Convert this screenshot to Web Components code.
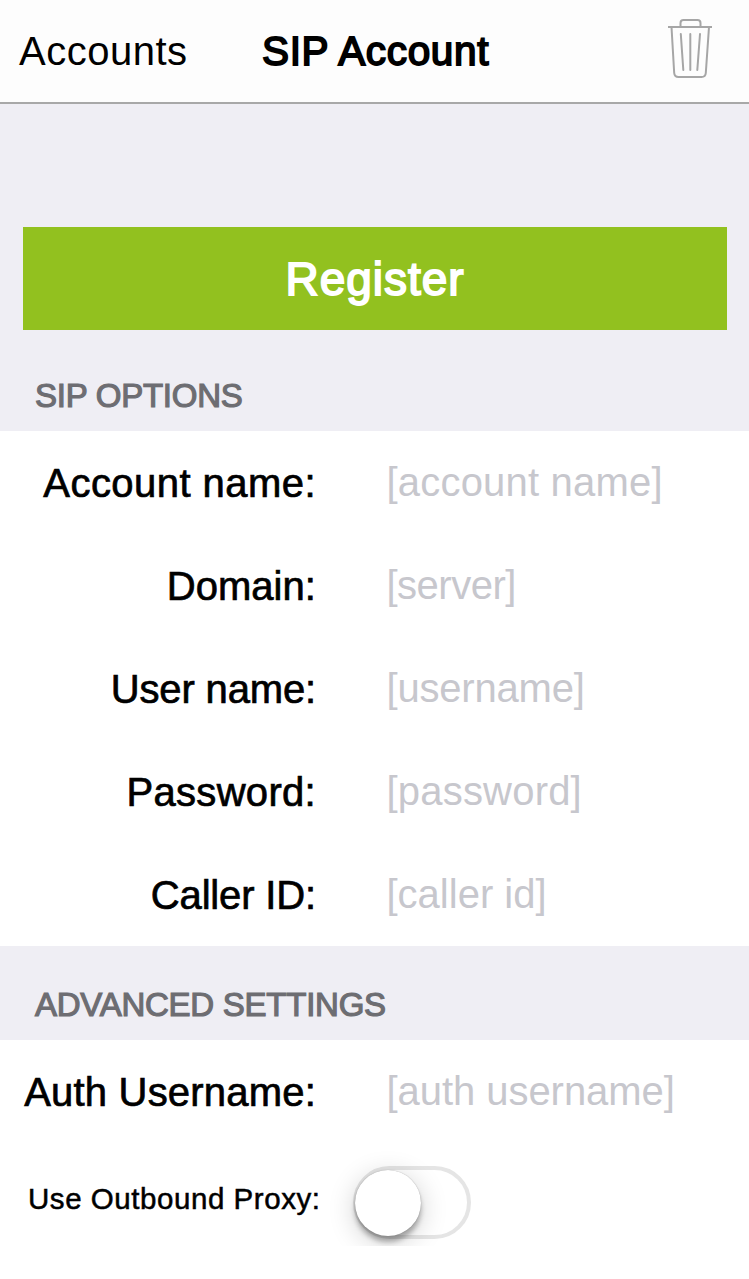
<!DOCTYPE html>
<html lang="en">
<head>
<meta charset="utf-8">
<title>SIP Account</title>
<style>
  body {
    margin: 0;
    background-color: #fff;
    color: #000;
    font-family: "Liberation Sans", Arial, sans-serif;
  }
</style>
</head>
<body>
<sip-app></sip-app>

<script>
class NavBar extends HTMLElement {
  constructor() {
    super();
    this.shadowDOM = this.attachShadow({ mode: 'open' });
  }

  connectedCallback() {
    this.shadowDOM.innerHTML = `
      <style>
        :host {
          display: grid;
          grid-template-columns: 243px 1fr auto;
          align-items: center;
          box-sizing: border-box;
          height: 104px;
          padding: 0 37px 0 19px;
          background-color: #fdfdfd;
          border-bottom: 2px solid #a8a8a8;
          line-height: 46px;
          white-space: nowrap;
        }

        .back {
          font-size: 40px;
          letter-spacing: .5px;
        }

        .title {
          font-size: 40.5px;
          letter-spacing: .65px;
          -webkit-text-stroke: 1.8px currentColor;
        }

        svg {
          display: block;
          width: 44px;
          height: 60px;
          margin-top: -6px;
        }
      </style>

      <span class="back">${this.getAttribute('back')}</span>
      <span class="title"><slot></slot></span>
      <svg viewBox="0 0 44 60" fill="none" stroke="#a6a6a6" stroke-width="2">
        <path d="M0 9H44M12.5 9V5Q12.5 2 15.5 2H29.5Q32.5 2 32.5 5V9"/>
        <path d="M3.5 9L6.2 55Q6.5 59 10.5 59H33.5Q37.5 59 37.8 55L41 9"/>
        <path stroke-linecap="round" d="M12.8 16L15.3 52M22.3 16V52M32 16L29.3 52"/>
      </svg>
    `;
  }
}

class RegisterButton extends HTMLElement {
  constructor() {
    super();
    this.shadowDOM = this.attachShadow({ mode: 'open' });
  }

  connectedCallback() {
    this.shadowDOM.innerHTML = `
      <style>
        :host {
          display: block;
          padding: 123px 22px 0 23px;
          background-color: #efeef4;
        }

        button {
          display: block;
          width: 100%;
          height: 103px;
          border: none;
          padding: 0;
          background-color: #92c11f;
          color: #fff;
          font-family: inherit;
          font-size: 46px;
          letter-spacing: .95px;
          -webkit-text-stroke: 1.8px currentColor;
          cursor: pointer;
        }
      </style>

      <button type="button"><slot></slot></button>
    `;
  }
}

class FormSection extends HTMLElement {
  constructor() {
    super();
    this.shadowDOM = this.attachShadow({ mode: 'open' });
  }

  connectedCallback() {
    this.shadowDOM.innerHTML = `
      <style>
        :host {
          display: block;
        }

        .heading {
          display: flex;
          align-items: flex-end;
          box-sizing: border-box;
          height: var(--heading-height, 94px);
          padding: 0 35px 16px;
          background-color: #efeef4;
          color: #6d6d72;
          font-size: 33px;
          line-height: 38px;
          letter-spacing: -.25px;
          -webkit-text-stroke: 1.2px currentColor;
        }
      </style>

      <div class="heading">${this.getAttribute('heading')}</div>
      <slot></slot>
    `;
  }
}

class FormField extends HTMLElement {
  constructor() {
    super();
    this.shadowDOM = this.attachShadow({ mode: 'open' });
  }

  connectedCallback() {
    this.shadowDOM.innerHTML = `
      <style>
        :host {
          display: grid;
          grid-template-columns: 316px 1fr;
          column-gap: 70.5px;
          align-items: center;
          height: 103px;
          font-size: 40px;
          line-height: 46px;
          white-space: nowrap;
        }

        .label {
          text-align: right;
          letter-spacing: var(--label-spacing, 0);
          -webkit-text-stroke: .7px currentColor;
        }

        .hint {
          color: #c7c7cd;
          letter-spacing: var(--hint-spacing, 0);
          margin-top: -1px;
        }
      </style>

      <span class="label"><slot></slot></span>
      <span class="hint">${this.getAttribute('hint')}</span>
    `;
  }
}

class ToggleField extends HTMLElement {
  constructor() {
    super();
    this.shadowDOM = this.attachShadow({ mode: 'open' });
  }

  connectedCallback() {
    this.shadowDOM.innerHTML = `
      <style>
        :host {
          display: flex;
          height: 103px;
          box-sizing: border-box;
          overflow: hidden;
          white-space: nowrap;
        }

        .label {
          width: 324px;
          padding: 39px 0 0 28px;
          box-sizing: border-box;
          font-size: 29.5px;
          line-height: 34px;
          letter-spacing: .55px;
          -webkit-text-stroke: .5px currentColor;
        }

        .track {
          box-sizing: border-box;
          width: 118px;
          height: 73px;
          margin: 23px 0 0 29px;
          border: 4px solid #e5e5e5;
          border-radius: 37px;
        }

        .knob {
          width: 66px;
          height: 66px;
          margin-left: -2px;
          border-radius: 50%;
          background-color: #fff;
          box-shadow: 0 0 1px rgba(0, 0, 0, .35), 0 6px 5px rgba(0, 0, 0, .28), 0 6px 28px rgba(0, 0, 0, .2);
        }
      </style>

      <span class="label"><slot></slot></span>
      <div class="track" role="switch" aria-checked="false"><div class="knob"></div></div>
    `;
  }
}

class SipApp extends HTMLElement {
  constructor() {
    super();
    this.shadowDOM = this.attachShadow({ mode: 'open' });
  }

  connectedCallback() {
    this.shadowDOM.innerHTML = `
      <style>
        :host {
          display: block;
          height: 1279px;
          overflow: hidden;
        }

        .options {
          --heading-height: 101px;
        }

        .account {
          --label-spacing: .45px;
          --hint-spacing: .2px;
        }

        .domain {
          --label-spacing: .05px;
          --hint-spacing: -.5px;
        }

        .user {
          --label-spacing: -.15px;
          --hint-spacing: -.2px;
        }

        .password {
          --label-spacing: .3px;
          --hint-spacing: .2px;
        }

        .caller {
          --label-spacing: -.15px;
          --hint-spacing: 0px;
        }

        .auth {
          --label-spacing: .2px;
          --hint-spacing: -.05px;
        }
      </style>

      <nav-bar back="Accounts">SIP Account</nav-bar>
      <register-button>Register</register-button>
      <form-section class="options" heading="SIP OPTIONS">
        <form-field class="account" hint="[account name]">Account name:</form-field>
        <form-field class="domain" hint="[server]">Domain:</form-field>
        <form-field class="user" hint="[username]">User name:</form-field>
        <form-field class="password" hint="[password]">Password:</form-field>
        <form-field class="caller" hint="[caller id]">Caller ID:</form-field>
      </form-section>
      <form-section heading="ADVANCED SETTINGS">
        <form-field class="auth" hint="[auth username]">Auth Username:</form-field>
        <toggle-field>Use Outbound Proxy:</toggle-field>
      </form-section>
    `;
  }
}

customElements.define('nav-bar', NavBar);
customElements.define('register-button', RegisterButton);
customElements.define('form-section', FormSection);
customElements.define('form-field', FormField);
customElements.define('toggle-field', ToggleField);
customElements.define('sip-app', SipApp);
</script>
</body>
</html>
